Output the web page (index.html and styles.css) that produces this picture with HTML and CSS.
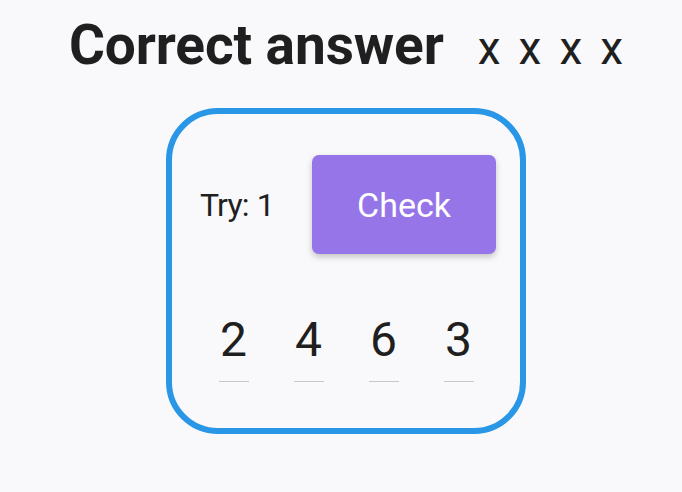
FILE: index.html
```html
<!DOCTYPE html>
<html>
<head>
<meta charset="utf-8">
<link rel="stylesheet" href="styles.css">
</head>
<body>
<div class="page">
  <div class="title-row">
    <span class="title">Correct answer</span>
    <span class="answer"><span>x</span><span>x</span><span>x</span><span>x</span></span>
  </div>
  <div class="box">
    <div class="top-row">
      <span class="try">Try: 1</span>
      <button class="check">Check</button>
    </div>
    <div class="digits">
      <div class="digit"><span>2</span><i></i></div>
      <div class="digit"><span>4</span><i></i></div>
      <div class="digit"><span>6</span><i></i></div>
      <div class="digit"><span>3</span><i></i></div>
    </div>
  </div>
</div>
</body>
</html>
```
FILE: styles.css
```css
html, body {
  margin: 0;
  padding: 0;
  background: #f9f9fb;
  font-family: Roboto, "Noto Sans", sans-serif;
  color: #1f1f1f;
}
.page {
  width: 682px;
  height: 492px;
  padding-left: 10px;
  box-sizing: border-box;
  display: flex;
  flex-direction: column;
  align-items: center;
}
.title-row {
  display: flex;
  align-items: baseline;
  gap: 34px;
  margin-top: 12px;
  margin-left: 0;
  height: 66px;
}
.title {
  font-size: 55px;
  font-weight: 700;
  letter-spacing: -0.1px;
  line-height: 66px;
}
.answer {
  display: flex;
  gap: 18px;
  font-size: 46px;
  font-weight: 400;
  line-height: 66px;
}
.box {
  margin-top: 30px;
  width: 348px;
  height: 314px;
  border: 6px solid #2996e6;
  border-radius: 52px;
  box-sizing: content-box;
  display: flex;
  flex-direction: column;
}
.top-row {
  display: flex;
  align-items: center;
  margin-top: 41px;
  height: 99px;
}
.try {
  width: 130px;
  text-align: center;
  font-size: 32px;
  letter-spacing: -0.8px;
  word-spacing: 1px;
}
.check {
  margin-left: 10px;
  width: 184px;
  height: 99px;
  border: none;
  border-radius: 7px;
  background: #9575e8;
  color: #ffffff;
  font-family: inherit;
  font-size: 34px;
  box-shadow: 0 3px 6px rgba(0,0,0,0.22);
  padding: 0;
}
.digits {
  display: flex;
  justify-content: center;
  gap: 45px;
  margin-top: 58px;
  margin-left: 24px;
  width: 300px;
}
.digit {
  width: 30px;
  display: flex;
  flex-direction: column;
  align-items: center;
}
.digit span {
  font-size: 48px;
  line-height: 56px;
}
.digit i {
  display: block;
  width: 30px;
  height: 1px;
  background: #c8c8c8;
  margin-top: 13px;
}
```
